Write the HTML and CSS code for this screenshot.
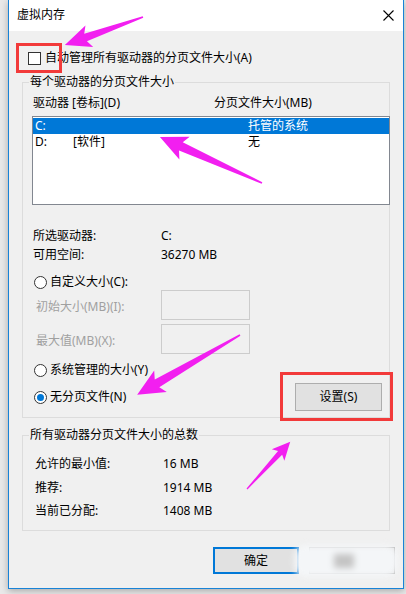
FILE: index.html
```html
<!DOCTYPE html>
<html>
<head>
<meta charset="utf-8">
<link rel="stylesheet" href="styles.css">
</head>
<body>
<div class="screen">
  <div class="dialog">
    <div class="titlebar">
      <span class="title">虚拟内存</span>
      <svg class="close" width="11" height="11" viewBox="0 0 11 11"><path d="M0.5 0.5 L10.5 10.5 M10.5 0.5 L0.5 10.5" stroke="#000" stroke-width="1.1" fill="none"/></svg>
    </div>
    <div class="content">
      <div class="check-row"><span class="checkbox"></span><span class="check-label">自动管理所有驱动器的分页文件大小(A)</span></div>

      <div class="group group-drives">
        <div class="legend">每个驱动器的分页文件大小</div>
        <div class="list-head"><span>驱动器 [卷标](D)</span><span>分页文件大小(MB)</span></div>
        <div class="listbox">
          <div class="row selected"><span>C:</span><span></span><span>托管的系统</span></div>
          <div class="row"><span>D:</span><span>[软件]</span><span>无</span></div>
        </div>
        <div class="info">
          <span>所选驱动器:</span><span>C:</span>
          <span>可用空间:</span><span>36270 MB</span>
        </div>
        <div class="radio-row first"><span class="radio"></span><span class="radio-label">自定义大小(C):</span></div>
        <div class="size-row"><span class="size-label">初始大小(MB)(I):</span><span class="size-input"></span></div>
        <div class="size-row second"><span class="size-label">最大值(MB)(X):</span><span class="size-input"></span></div>
        <div class="radio-row system"><span class="radio"></span><span class="radio-label">系统管理的大小(Y)</span></div>
        <div class="last-row">
          <div class="radio-row inline"><span class="radio checked"></span><span class="radio-label">无分页文件(N)</span></div>
          <div class="btn set-btn">设置(S)</div>
        </div>
      </div>

      <div class="group group-total">
        <div class="legend">所有驱动器分页文件大小的总数</div>
        <div class="totals">
          <span>允许的最小值:</span><span>16 MB</span>
          <span>推荐:</span><span>1914 MB</span>
          <span>当前已分配:</span><span>1408 MB</span>
        </div>
      </div>

      <div class="buttons">
        <div class="btn ok-btn">确定</div>
        <div class="btn cancel-btn"><span class="smudge"><span class="smudge-dark"></span></span></div>
      </div>
    </div>
  </div>

  <div class="redbox rb-check"></div>
  <div class="redbox rb-set"></div>

  <svg class="annot" width="406" height="594" viewBox="0 0 406 594">
    <g fill="#f21ff0">
      <path transform="translate(143,17) rotate(160.3)" d="M0,-0.8 L61,-4 L57,-11.5 L83,0 L57,11.5 L61,4 L0,0.8 Z"/>
      <path transform="translate(262,183) rotate(-155.7)" d="M0,-0.8 L89,-4.5 L85,-12.5 L112,0 L85,12.5 L89,4.5 L0,0.8 Z"/>
      <path transform="translate(240,335) rotate(149.8)" d="M0,-0.8 L96,-4.5 L92,-12.5 L119,0 L92,12.5 L96,4.5 L0,0.8 Z"/>
      <path transform="translate(247,489) rotate(-47.5)" d="M0,-0.6 L49,-2.8 L46,-8.5 L64,0 L46,8.5 L49,2.8 L0,0.6 Z"/>
    </g>
  </svg>
</div>
</body>
</html>
```
FILE: styles.css
```css
* { box-sizing: border-box; margin: 0; padding: 0; }
html, body { width: 406px; height: 594px; overflow: hidden; }
body {
  background: #e9e9e9;
  font-family: "Noto Sans", "Noto Sans CJK SC", "Liberation Sans", sans-serif;
  font-size: 12px;
  line-height: 16px;
  color: #000;
}
.screen { position: relative; width: 406px; height: 594px; }

.dialog {
  margin-left: 8px;
  width: 396px;
  height: 589px;
  border: 1px solid #1883d7;
  border-top: none;
  background: #f0f0f0;
  box-shadow: 0 2px 7px rgba(0,0,0,0.28);
  display: flex;
  flex-direction: column;
}
.titlebar {
  height: 31px;
  flex: none;
  background: #fff;
  display: flex;
  align-items: center;
  justify-content: space-between;
  padding-left: 8px;
  padding-right: 9px;
}
.title { line-height: 16px; margin-top: -1px; }
.close { display: block; margin-top: -1px; }

.content { padding-left: 13px; }

.check-row { margin-top: 19px; height: 16px; display: flex; align-items: center; }
.checkbox { width: 13px; height: 13px; border: 1px solid #333; background: #fff; margin-left: 6px; }
.check-label { margin-left: 4px; }

.group { width: 368px; border: 1px solid #dcdcdc; }
.group-drives { margin-top: 16px; height: 336px; }
.group-total { margin-top: 17px; height: 96px; }
.legend {
  width: fit-content;
  margin: -9px 0 0 6px;
  padding: 0 1px;
  background: #f0f0f0;
  line-height: 16px;
}

.list-head {
  margin-top: 5px;
  padding-left: 10px;
  display: grid;
  grid-template-columns: 181px auto;
  height: 16px;
}
.listbox {
  margin: 5px 0 0 9px;
  width: 358px;
  height: 89px;
  border: 1px solid #828790;
  background: #fff;
  padding-top: 1px;
}
.row {
  height: 16px;
  display: grid;
  grid-template-columns: 38px 175px auto;
  padding-left: 2px;
}
.row.selected { background: #0078d7; color: #fff; }

.info {
  margin-top: 23px;
  padding-left: 10px;
  display: grid;
  grid-template-columns: 128px auto;
  row-gap: 3px;
}

.radio-row { display: flex; align-items: center; height: 16px; padding-left: 11px; }
.radio-row.first { margin-top: 11px; }
.radio-row.system { margin-top: 8px; }
.radio {
  width: 13px; height: 13px;
  border: 1px solid #333;
  border-radius: 50%;
  background: #fff;
  display: flex; align-items: center; justify-content: center;
}
.radio.checked::after {
  content: "";
  width: 7px; height: 7px;
  border-radius: 50%;
  background: #0078d7;
}
.radio-label { margin-left: 3px; }

.size-row {
  display: grid;
  grid-template-columns: 125px 89px;
  align-items: center;
  height: 30px;
  padding-left: 13px;
}
.size-row.second { margin-top: 4px; }
.size-label { color: #a0a0a0; margin-top: 3px; }
.size-input { height: 30px; border: 1px solid #cccccc; background: #f0f0f0; }

.last-row {
  margin-top: 5px;
  height: 28px;
  display: flex;
  align-items: center;
  justify-content: space-between;
  padding-right: 7px;
}
.radio-row.inline { padding-left: 11px; }

.btn {
  display: flex;
  align-items: center;
  justify-content: center;
  background: #e1e1e1;
  border: 1px solid #adadad;
}
.set-btn { width: 87px; height: 28px; }

.totals {
  margin-top: 13px;
  padding-left: 12px;
  display: grid;
  grid-template-columns: 128px auto;
  row-gap: 7.5px;
}

.buttons { margin-top: 16px; display: flex; height: 27px; }
.ok-btn { margin-left: 191px; width: 86px; height: 27px; border: 2px solid #0078d7; }
.cancel-btn { margin-left: 10px; width: 86px; height: 27px; position: relative; }
.smudge {
  position: absolute;
  left: -16px; top: -3px;
  width: 104px; height: 32px;
  background: #f4f6f8;
  filter: blur(3px);
  border-radius: 12px;
}
.smudge-dark {
  position: absolute;
  left: 40px; top: 9px;
  width: 20px; height: 14px;
  background: #c4c4c4;
}

.redbox { position: absolute; border: 3px solid #f23a3a; }
.rb-check { left: 16px; top: 43px; width: 46px; height: 30px; }
.rb-set { left: 280px; top: 372px; width: 113px; height: 49px; }

.annot { position: absolute; left: 0; top: 0; pointer-events: none; }
```
